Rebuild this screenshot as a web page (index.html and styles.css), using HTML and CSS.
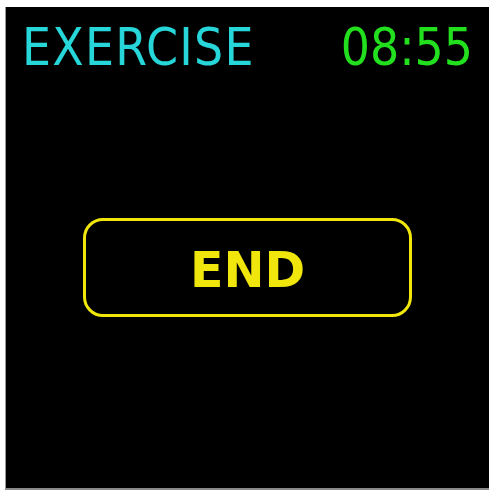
FILE: index.html
```html
<!DOCTYPE html>
<html>
<head>
<meta charset="utf-8">
<link rel="stylesheet" href="styles.css">
</head>
<body>
<div class="screen">
  <div class="header">
    <span class="title">EXERCISE</span>
    <span class="clock">08:55</span>
  </div>
  <div class="end-btn">END</div>
</div>
</body>
</html>
```
FILE: styles.css
```css
html, body {
  margin: 0;
  padding: 0;
  background: #ffffff;
}
.screen {
  margin: 7px 0 0 5px;
  height: 483px;
  background: #000000;
  border-left: 1px solid #9a9a9a;
  border-bottom: 2px solid #8a8a8a;
  box-sizing: border-box;
  display: flex;
  flex-direction: column;
  align-items: center;
}
.header {
  align-self: stretch;
  display: flex;
  justify-content: space-between;
  padding: 15px 16px 0 16px;
  font-family: "DejaVu Sans", sans-serif;
  font-stretch: condensed;
  font-weight: normal;
  font-size: 51px;
  line-height: 51px;
}
.title {
  color: #27d6d8;
  letter-spacing: 1.3px;
}
.clock {
  color: #22e01e;
}
.end-btn {
  margin-top: 145px;
  width: 329px;
  height: 99px;
  box-sizing: border-box;
  border: 3px solid #f0e60c;
  border-radius: 20px;
  padding-top: 25px;
  text-align: center;
  color: #f0e60c;
  font-family: "DejaVu Sans", sans-serif;
  font-weight: bold;
  font-size: 49px;
  line-height: 49px;
}
```
